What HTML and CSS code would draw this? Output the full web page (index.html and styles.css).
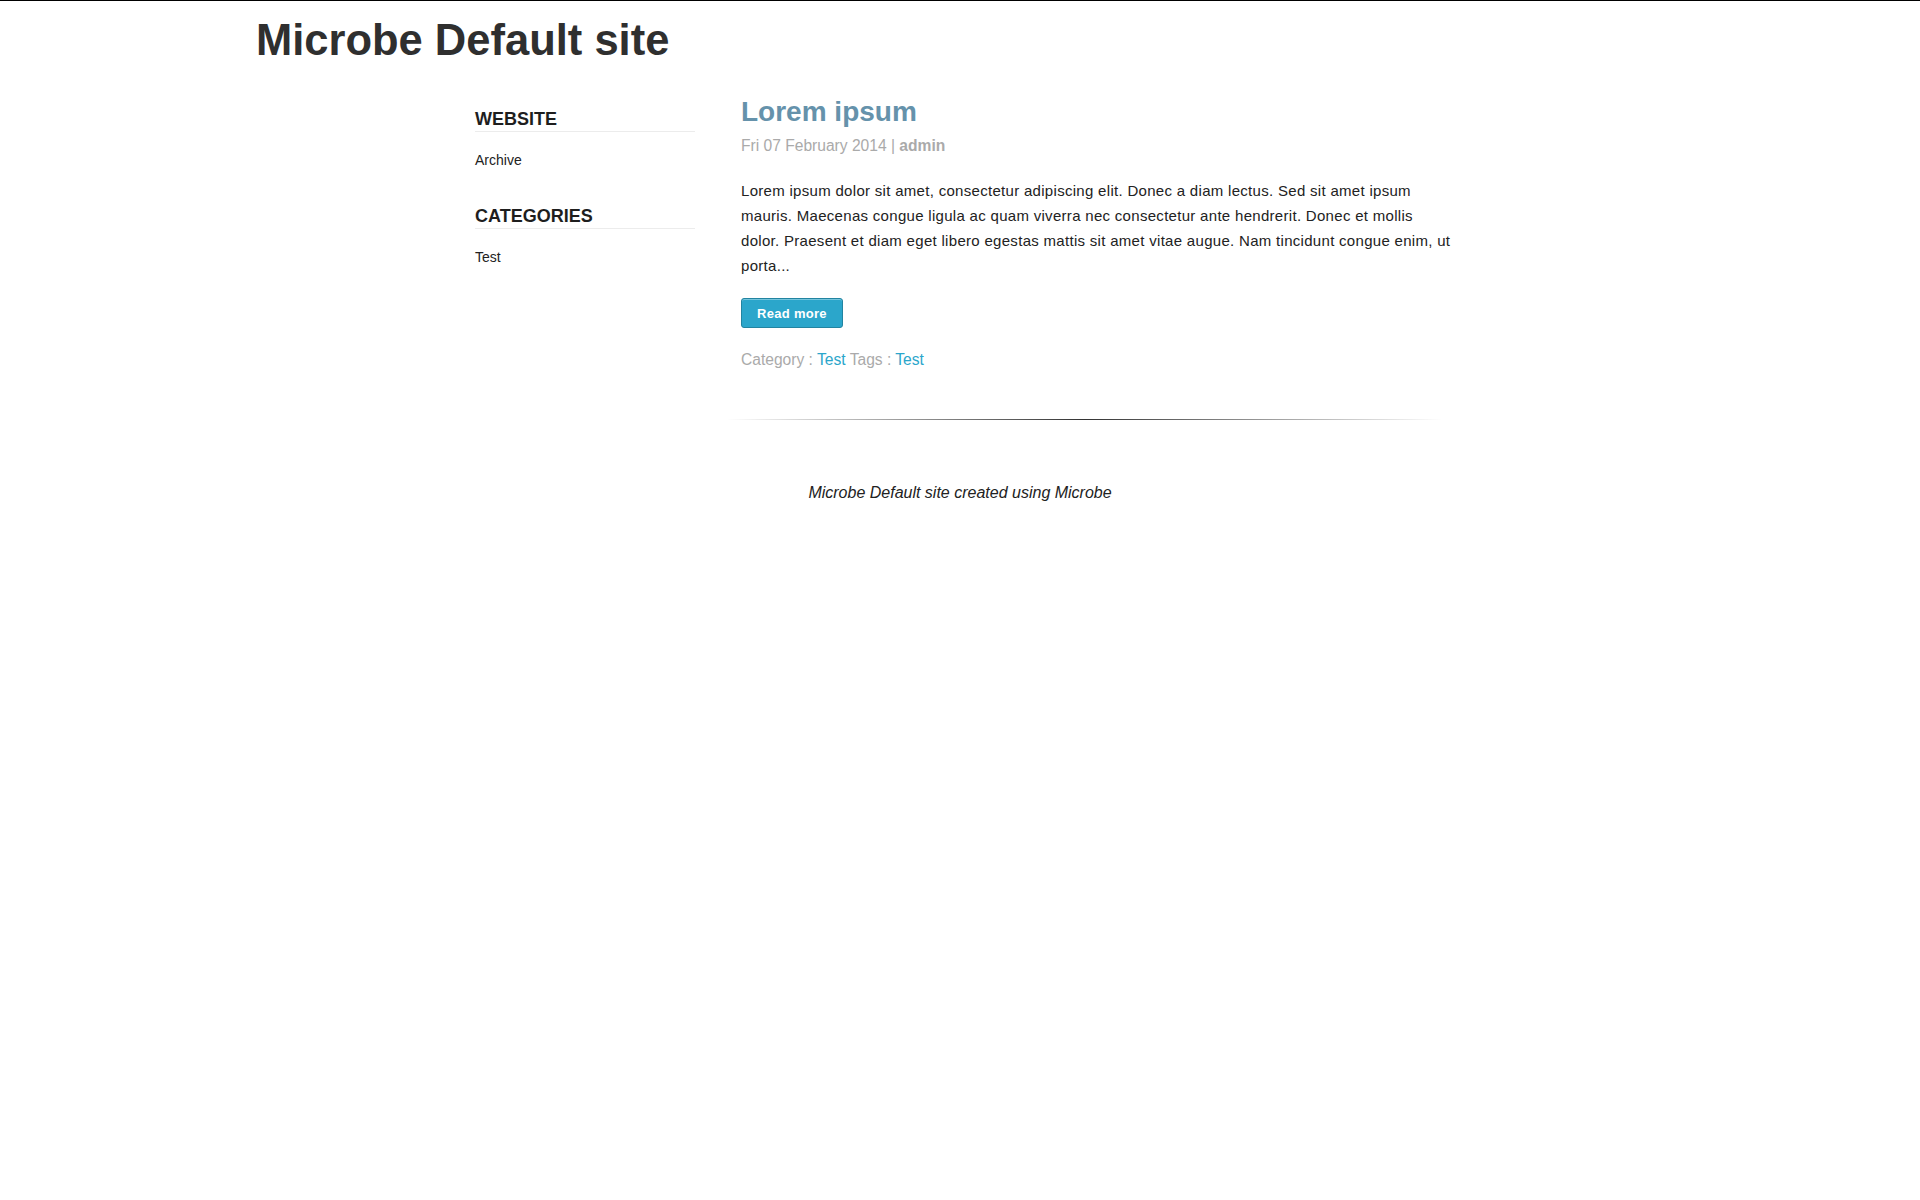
FILE: index.html
```html
<!DOCTYPE html>
<html lang="en">
<head>
<meta charset="utf-8">
<title>Microbe Default site</title>
<link rel="stylesheet" href="styles.css">
</head>
<body>
<header class="site-header">
  <h1 class="site-title">Microbe Default site</h1>
</header>
<div class="layout">
  <aside class="sidebar">
    <section class="widget">
      <h3 class="widget-title">WEBSITE</h3>
      <ul class="widget-list">
        <li><a href="#">Archive</a></li>
      </ul>
    </section>
    <section class="widget">
      <h3 class="widget-title">CATEGORIES</h3>
      <ul class="widget-list">
        <li><a href="#">Test</a></li>
      </ul>
    </section>
  </aside>
  <main class="content">
    <article class="post">
      <h2 class="post-title"><a href="#">Lorem ipsum</a></h2>
      <p class="post-meta">Fri 07 February 2014 | <strong>admin</strong></p>
      <p class="post-excerpt">Lorem ipsum dolor sit amet, consectetur adipiscing elit. Donec a diam lectus. Sed sit amet ipsum mauris. Maecenas congue ligula ac quam viverra nec consectetur ante hendrerit. Donec et mollis dolor. Praesent et diam eget libero egestas mattis sit amet vitae augue. Nam tincidunt congue enim, ut porta...</p>
      <div class="post-actions"><a class="button" href="#">Read more</a></div>
      <p class="post-tax">Category : <a href="#">Test</a> Tags : <a href="#">Test</a></p>
    </article>
    <hr class="divider">
  </main>
</div>
<footer class="site-footer">Microbe Default site created using Microbe</footer>
</body>
</html>
```
FILE: styles.css
```css
html, body {
  margin: 0;
  padding: 0;
  background: #fff;
}
body {
  border-top: 1px solid #000;
  font-family: "Liberation Sans", Arial, sans-serif;
  color: #222;
}
a {
  text-decoration: none;
}
.site-header {
  width: 1404px;
  margin: 0 auto;
  padding-top: 14px;
}
.site-title {
  margin: 0 0 0 -2px;
  font-size: 43.5px;
  line-height: 50px;
  font-weight: bold;
  color: #2f2f2f;
}
.layout {
  width: 1404px;
  margin: 0 auto;
  padding: 31px 0 0 217px;
  box-sizing: border-box;
  display: flex;
  gap: 46px;
  align-items: flex-start;
}
.sidebar {
  width: 220px;
  flex: none;
  padding-top: 12px;
}
.widget + .widget {
  margin-top: 35px;
}
.widget-title {
  margin: 0;
  font-size: 18px;
  line-height: 22px;
  font-weight: bold;
  color: #1e1e1e;
  padding-bottom: 1px;
  border-bottom: 1px solid #ececec;
}
.widget-list {
  list-style: none;
  margin: 18px 0 0;
  padding: 0;
}
.widget-list li {
  font-size: 14px;
  line-height: 20px;
}
.widget-list a {
  color: #222;
}
.content {
  width: 712px;
  flex: none;
}
.post-title {
  margin: 0;
  font-size: 28px;
  line-height: 32px;
  font-weight: bold;
}
.post-title a {
  color: #6592ab;
}
.post-meta {
  margin: 8px 0 0;
  font-size: 15.6px;
  line-height: 20px;
  color: #aaa;
}
.post-meta strong {
  color: #aaa;
}
.post-excerpt {
  margin: 22px 0 0;
  font-size: 15px;
  line-height: 25px;
  letter-spacing: 0.3px;
  color: #222;
}
.post-actions {
  margin-top: 20px;
  display: flex;
}
.button {
  display: inline-flex;
  align-items: center;
  height: 30px;
  box-sizing: border-box;
  padding: 0 15px;
  border: 1px solid #2284a1;
  border-radius: 3px;
  background: #2ba6cb;
  box-shadow: inset 0 1px 0 rgba(255, 255, 255, 0.35);
  color: #fff;
  font-size: 13px;
  font-weight: bold;
  letter-spacing: 0.3px;
}
.post-tax {
  margin: 22px 0 0;
  font-size: 15.6px;
  line-height: 20px;
  color: #aaa;
}
.post-tax a {
  color: #2ba6cb;
}
.divider {
  margin: 49px 0 0 -14px;
  width: 715px;
  height: 1px;
  border: 0;
  background: linear-gradient(to right, rgba(51, 51, 51, 0), #333 50%, rgba(51, 51, 51, 0));
}
.site-footer {
  margin-top: 63px;
  text-align: center;
  font-size: 16px;
  line-height: 20px;
  font-style: italic;
  color: #222;
}
```
